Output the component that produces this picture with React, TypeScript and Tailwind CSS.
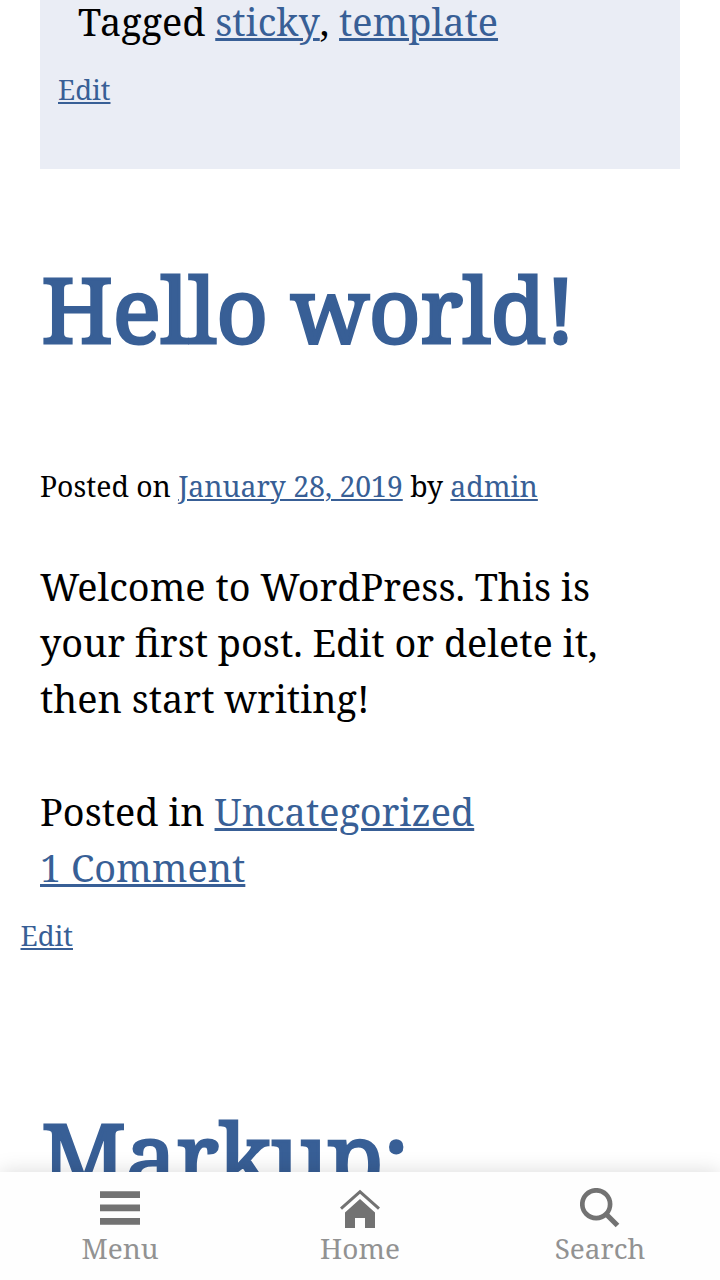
import type { ReactNode } from "react";

function Link({ children, small }: { children: ReactNode; small?: boolean }) {
  return (
    <a
      href="#"
      className={
        small
          ? "text-[#385f96] underline decoration-2 underline-offset-2"
          : "text-[#385f96] underline decoration-[3px] underline-offset-2"
      }
    >
      {children}
    </a>
  );
}

function Title({ children }: { children: ReactNode }) {
  return (
    <h1 className="pl-[1.5px] text-[90px] leading-[112px] font-normal tracking-[-0.15px] text-[#385f96] [-webkit-text-stroke:3px_#385f96]">
      {children}
    </h1>
  );
}

function MenuIcon() {
  return (
    <svg width="40" height="40" viewBox="0 0 40 40" fill="#727272">
      <path d="M0 3.2h40v6.7H0zM0 16.4h40v6.8H0zM0 29.9h40v6.8H0z" />
    </svg>
  );
}

function HomeIcon() {
  return (
    <svg width="40" height="40" viewBox="0 0 40 40" fill="#727272">
      <path d="M20 1.8L40 19.6L38 21.8L20 5.8L2 21.8L0 19.6Z" />
      <path d="M20 11L35 24.5V40H25V30H15V40H5V24.5Z" />
    </svg>
  );
}

function SearchIcon() {
  return (
    <svg width="40" height="40" viewBox="0 0 40 40" fill="none" stroke="#727272">
      <circle cx="16.2" cy="16.2" r="13.9" strokeWidth="4.7" />
      <path d="M25.5 25.5L37.5 37.5" strokeWidth="5.2" />
    </svg>
  );
}

function NavItem({ icon, label }: { icon: ReactNode; label: string }) {
  return (
    <a href="#" className="flex flex-1 flex-col items-center text-[28px] leading-[40px] text-[#929292]">
      {icon}
      {label}
    </a>
  );
}

export default function App() {
  return (
    <div className="flex h-[1280px] w-[720px] flex-col overflow-hidden bg-white font-['Noto_Serif','DejaVu_Serif',serif] text-[37.8px] leading-[56px] text-black">
      <main className="min-h-0 flex-1 overflow-hidden">
        <section className="mx-10 flex h-[169px] flex-col bg-[#eaedf5]">
          <p className="-mt-[6px] h-[56px] pl-[38px]">
            Tagged{" "}
            <span className="inline-block">
              <Link>sticky</Link>
            </span>
            , <Link>template</Link>
          </p>
          <p className="pt-[19px] pl-[18px] text-[27.5px] leading-[42px]">
            <Link small>Edit</Link>
          </p>
        </section>
        <article className="px-10 pt-[83px]">
          <Title>Hello world!</Title>
          <p className="mt-[101px] text-[28.35px] leading-[42px]">
            Posted on <Link small>January 28, 2019</Link> by <Link small>admin</Link>
          </p>
          <p className="mt-[52px]">
            Welcome to WordPress. This is
            <br />
            your first post. Edit or delete it,
            <br />
            then start writing!
          </p>
          <p className="mt-[57px]">
            Posted in <Link>Uncategorized</Link>
            <br />
            <Link>1 Comment</Link>
          </p>
          <p className="-ml-[19.5px] mt-[19px] text-[27.5px] leading-[42px]">
            <Link small>Edit</Link>
          </p>
        </article>
        <article className="px-10 pt-[141px]">
          <Title>Markup:</Title>
        </article>
      </main>
      <nav className="relative flex h-[108px] shrink-0 bg-[#fefefe] pt-4 shadow-[0_0_20px_rgba(0,0,0,0.15)]">
        <NavItem icon={<MenuIcon />} label="Menu" />
        <NavItem icon={<HomeIcon />} label="Home" />
        <NavItem icon={<SearchIcon />} label="Search" />
      </nav>
    </div>
  );
}
